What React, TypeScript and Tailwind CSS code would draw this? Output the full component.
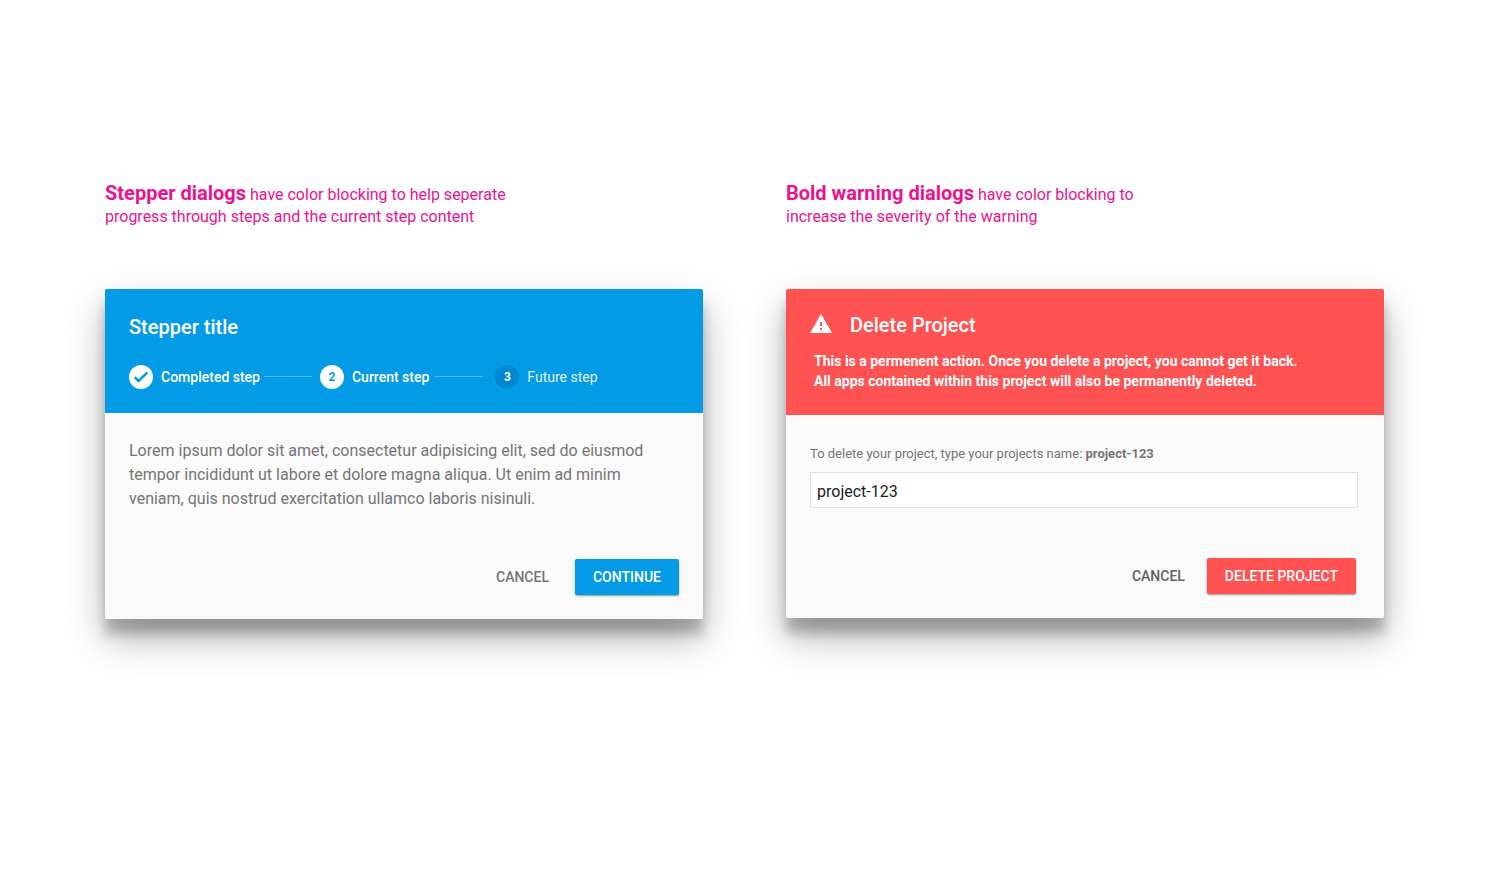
import { useState, type ReactNode } from "react";

function Caption({ title, children }: { title: string; children: ReactNode }) {
  return (
    <p className="max-w-[410px] text-base leading-[22px] text-[#e91390]">
      <strong className="text-xl leading-[22px] font-bold">{title}</strong> {children}
    </p>
  );
}

function Dialog({ label, children }: { label: string; children: ReactNode }) {
  return (
    <section
      role="dialog"
      aria-label={label}
      className="mt-[61px] rounded-xs bg-[#fafafa] shadow-[0_19px_38px_rgba(0,0,0,0.3),0_15px_12px_rgba(0,0,0,0.22)]"
    >
      {children}
    </section>
  );
}

function StepLine() {
  return <span aria-hidden="true" className="h-0.5 w-12 border-t border-[#4fb9ef]" />;
}

function Stepper() {
  return (
    <ol className="mt-6 flex items-center text-sm leading-6 font-medium text-white">
      <li className="flex items-center gap-2">
        <span className="flex size-6 items-center justify-center rounded-full bg-white">
          <svg viewBox="0 0 24 24" className="size-[18px] fill-[#039be5]" aria-hidden="true">
            <path d="M8.8 15.6 4.7 11.5 2.4 13.8 8.8 20.2 21.6 7.4 19.3 5.1z" transform="translate(0 -0.5)" />
          </svg>
        </span>
        Completed step
      </li>
      <li className="flex items-center">
        <span className="flex pr-2 pl-1">
          <StepLine />
        </span>
        <span className="flex size-6 items-center justify-center rounded-full bg-white text-xs font-bold text-[#039be5]">
          2
        </span>
        <span className="pl-2">Current step</span>
      </li>
      <li className="flex items-center">
        <span className="flex pr-3 pl-1.5">
          <StepLine />
        </span>
        <span className="flex size-6 items-center justify-center rounded-full bg-[#0288d1] text-xs font-bold">
          3
        </span>
        <span className="pl-2 font-normal text-[#e1f3fc]">Future step</span>
      </li>
    </ol>
  );
}

export default function App() {
  const [name, setName] = useState("project-123");

  return (
    <main className="grid min-h-screen grid-cols-1 items-start gap-x-[83px] gap-y-24 bg-white pt-[182px] pr-[104px] pb-24 pl-[105px] font-[Roboto,sans-serif] lg:grid-cols-2">
      <div>
        <Caption title="Stepper dialogs">have color blocking to help seperate progress through steps and the current step content</Caption>
        <Dialog label="Stepper title">
          <header className="rounded-t-xs bg-[#039be5] px-6 pt-6 pb-6">
            <h2 className="text-xl leading-7 font-medium text-white">Stepper title</h2>
            <Stepper />
          </header>
          <p className="max-w-[580px] px-6 pt-[26px] text-base leading-6 text-[#757575]">
            Lorem ipsum dolor sit amet, consectetur adipisicing elit, sed do eiusmod tempor incididunt ut labore et dolore magna aliqua. Ut enim ad minim veniam, quis nostrud exercitation ullamco laboris nisinuli.
          </p>
          <footer className="flex items-center justify-end gap-2 px-6 pt-12 pb-6">
            <button type="button" className="h-9 px-[18px] text-sm font-medium text-[#757575]">
              CANCEL
            </button>
            <button type="button" className="h-9 rounded-xs bg-[#039be5] px-[18px] text-sm font-medium text-white shadow-[0_1px_2px_rgba(0,0,0,0.4)]">
              CONTINUE
            </button>
          </footer>
        </Dialog>
      </div>

      <div>
        <Caption title="Bold warning dialogs">have color blocking to increase the severity of the warning</Caption>
        <Dialog label="Delete Project">
          <header className="rounded-t-xs bg-[#ff5252] px-6 pt-[22px] pb-6 text-white">
            <h2 className="flex items-center gap-[18px] text-xl leading-7 font-medium">
              <svg viewBox="1 2 22 19" className="mb-1 h-[19px] w-[22px] fill-white" aria-hidden="true">
                <path d="M1 21h22L12 2 1 21zm12-3h-2v-2h2v2zm0-4h-2v-4h2v4z" />
              </svg>
              Delete Project
            </h2>
            <p className="mt-3 px-1 text-sm leading-5 font-bold">
              This is a permenent action. Once you delete a project, you cannot get it back.
              <br />
              All apps contained within this project will also be permanently deleted.
            </p>
          </header>
          <div className="pt-[29px] pr-[26px] pl-6">
            <label htmlFor="project-name" className="block text-[13px] leading-5 text-[#757575]">
              To delete your project, type your projects name: <strong className="font-bold">project-123</strong>
            </label>
            <input
              id="project-name"
              type="text"
              value={name}
              onChange={(event) => setName(event.target.value)}
              className="mt-2 h-9 w-full border border-[#e0e0e0] bg-white px-1.5 pt-0.5 text-base text-[#212121] outline-none"
            />
          </div>
          <footer className="flex items-center justify-end gap-1 px-7 pt-[50px] pb-6">
            <button type="button" className="h-9 px-[18px] text-sm font-medium text-[#616161]">
              CANCEL
            </button>
            <button type="button" className="h-9 rounded-xs bg-[#ff5252] px-[18px] text-sm font-medium text-white shadow-[0_1px_2px_rgba(0,0,0,0.4)]">
              DELETE PROJECT
            </button>
          </footer>
        </Dialog>
      </div>
    </main>
  );
}
